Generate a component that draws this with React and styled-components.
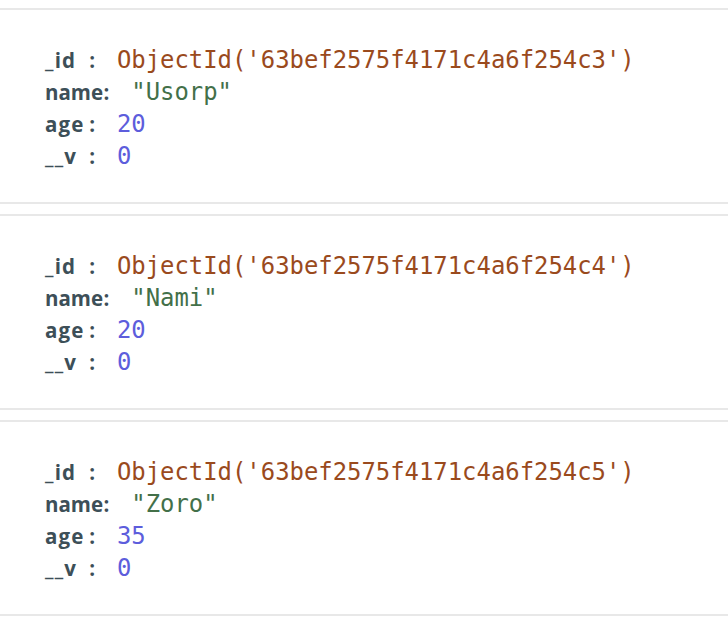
import React from "react";
import styled, { createGlobalStyle } from "styled-components";

const GlobalStyle = createGlobalStyle`
  body {
    margin: 0;
    background: #ffffff;
  }
`;

// one character cell of the mono font (0.602em of 23.9px)
const CELL = 14.39;

const List = styled.div`
  display: flex;
  flex-direction: column;
  gap: 10px;
  padding-top: 8px;
`;

const Card = styled.div`
  box-sizing: border-box;
  height: 196px;
  border-top: 2px solid #e8e8e8;
  border-bottom: 2px solid #e8e8e8;
  padding: 34px 0 0 45px;
`;

const Row = styled.div`
  display: flex;
  align-items: baseline;
  height: 32px;
  line-height: 32px;
  white-space: pre;
  font-family: "DejaVu Sans Mono", "Liberation Mono", monospace;
  font-size: 23.9px;
  color: #3d4f58;
`;

// key takes as many mono cells as it has letters, like the reference
const Key = styled.span`
  display: inline-block;
  width: ${(p) => p.$len * CELL}px;
  font-family: "Open Sans", "Noto Sans", sans-serif;
  font-weight: 700;
  font-size: 20.5px;
  letter-spacing: ${(p) => (p.$len > 3 ? 0 : 1.2)}px;
  color: #3d4f58;
`;

const Colon = styled.span`
  display: inline-block;
  width: ${CELL * 2}px;
  padding-left: 1px;
  box-sizing: border-box;
  font-family: "Open Sans", "Noto Sans", sans-serif;
  font-weight: 700;
  font-size: 20.5px;
  color: #3d4f58;
`;

const Value = styled.span`
  color: ${(p) => p.$color};
`;

const colors = {
  oid: "#9a4a1d",
  string: "#437049",
  number: "#5d5ddc",
};

const docs = [
  { id: "63bef2575f4171c4a6f254c3", name: "Usorp", age: 20, v: 0 },
  { id: "63bef2575f4171c4a6f254c4", name: "Nami", age: 20, v: 0 },
  { id: "63bef2575f4171c4a6f254c5", name: "Zoro", age: 35, v: 0 },
];

function Field({ name, value, kind }) {
  return (
    <Row>
      <Key $len={name.length}>{name}</Key>
      <Colon>:</Colon>
      <Value $color={colors[kind]}>{value}</Value>
    </Row>
  );
}

export default function App() {
  return (
    <>
      <GlobalStyle />
      <List>
        {docs.map((doc) => (
          <Card key={doc.id}>
            <Field name="_id" value={`ObjectId('${doc.id}')`} kind="oid" />
            <Field name="name" value={`"${doc.name}"`} kind="string" />
            <Field name="age" value={doc.age} kind="number" />
            <Field name="__v" value={doc.v} kind="number" />
          </Card>
        ))}
      </List>
    </>
  );
}
